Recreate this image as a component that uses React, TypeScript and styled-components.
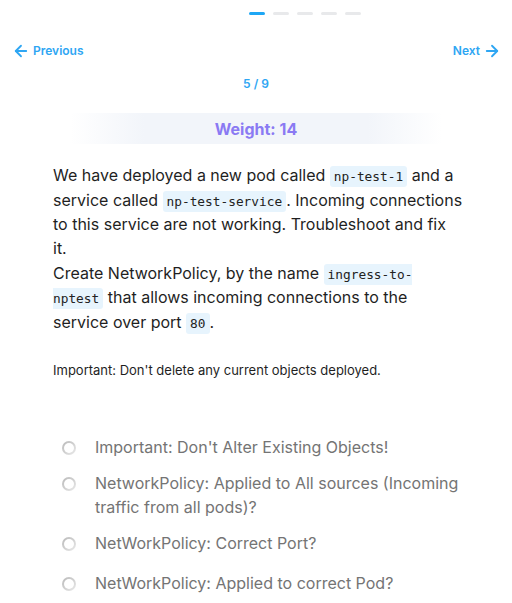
import React from "react";
import styled, { createGlobalStyle } from "styled-components";
import { ArrowLeft, ArrowRight } from "lucide-react";

const Global = createGlobalStyle`
  html, body { margin: 0; padding: 0; background: #ffffff; }
  body { font-family: Inter, "Noto Sans", "Liberation Sans", sans-serif; color: #1f1f1f; }
  * { box-sizing: border-box; }
`;

const Page = styled.div`
  width: 512px;
  height: 603px;
  overflow: hidden;
  display: flex;
  flex-direction: column;
`;

const Dots = styled.div`
  display: flex;
  gap: 8px;
  padding-left: 249px;
  margin-top: 12px;
`;

const Dot = styled.span<{ $active?: boolean }>`
  width: 16px;
  height: 3px;
  border-radius: 2px;
  background: ${(p) => (p.$active ? "#1ea7f5" : "#e8e9eb")};
`;

const Nav = styled.div`
  display: flex;
  justify-content: space-between;
  align-items: center;
  padding: 0 11px 0 12px;
  margin-top: 26px;
  height: 20px;
`;

const NavLink = styled.a`
  display: flex;
  align-items: center;
  gap: 3px;
  color: #2ea6f3;
  font-size: 12px;
  font-weight: 600;
  cursor: pointer;
  text-decoration: none;
`;

const Counter = styled.div`
  text-align: center;
  color: #2ea6f3;
  font-size: 12px;
  font-weight: 600;
  margin-top: 16px;
  line-height: 16px;
`;

const WeightBand = styled.div`
  margin: 21px 70px 0;
  height: 32px;
  display: flex;
  align-items: center;
  justify-content: center;
  background: linear-gradient(90deg, rgba(240, 244, 250, 0) 0%, #f2f5fa 20%, #f2f5fa 80%, rgba(240, 244, 250, 0) 100%);
  color: #8a7af3;
  font-size: 16px;
  font-weight: 700;
`;

const Question = styled.div`
  padding: 0 0 0 53px;
  width: 480px;
  margin-top: 19px;
  font-size: 16px;
  line-height: 24.4px;
  color: #1f1f1f;
`;

const Code = styled.code`
  font-family: "DejaVu Sans Mono", "Liberation Mono", monospace;
  font-size: 12.8px;
  line-height: 16px;
  background: #e7f4fd;
  color: #222;
  padding: 3px 4px;
  border-radius: 3px;
`;

const Note = styled.p`
  margin: 26px 0 0 53px;
  font-size: 13px;
  line-height: 20px;
  color: #1f1f1f;
`;

const Options = styled.ul`
  list-style: none;
  margin: 47px 0 0;
  padding: 0;
`;

const Option = styled.li`
  display: flex;
  align-items: center;
  min-height: 40px;
  padding: 4px 30px 4px 62px;
`;

const OptionRow = styled.label`
  display: flex;
  align-items: flex-start;
  gap: 19px;
  font-size: 16px;
  line-height: 24px;
  color: #747474;
`;

const Radio = styled.span`
  flex: none;
  width: 14px;
  height: 14px;
  margin-top: 6px;
  border-radius: 50%;
  background: linear-gradient(135deg, #b9b9b9 0%, #d0d0d0 50%, #ececec 100%);
  display: flex;
  align-items: center;
  justify-content: center;
  &::after {
    content: "";
    width: 10px;
    height: 10px;
    border-radius: 50%;
    background: #fff;
  }
`;

const options = [
  "Important: Don't Alter Existing Objects!",
  "NetworkPolicy: Applied to All sources (Incoming traffic from all pods)?",
  "NetWorkPolicy: Correct Port?",
  "NetWorkPolicy: Applied to correct Pod?",
];

export default function App() {
  return (
    <Page>
      <Global />
      <Dots>
        <Dot $active />
        <Dot />
        <Dot />
        <Dot />
        <Dot />
      </Dots>
      <Nav>
        <NavLink>
          <ArrowLeft size={18} strokeWidth={2.4} />
          Previous
        </NavLink>
        <NavLink>
          Next
          <ArrowRight size={18} strokeWidth={2.4} />
        </NavLink>
      </Nav>
      <Counter>5 / 9</Counter>
      <WeightBand>Weight: 14</WeightBand>
      <Question>
        We have deployed a new pod called <Code>np-test-1</Code> and a<br />
        service called <Code>np-test-service</Code>. Incoming connections<br />
        to this service are not working. Troubleshoot and fix<br />
        it.
        <br />
        Create NetworkPolicy, by the name <Code>ingress-to-<br />nptest</Code> that allows
        incoming connections to the<br />
        service over port <Code>80</Code>.
      </Question>
      <Note>Important: Don't delete any current objects deployed.</Note>
      <Options>
        {options.map((o) => (
          <Option key={o}>
            <OptionRow>
              <Radio />
              <span>{o}</span>
            </OptionRow>
          </Option>
        ))}
      </Options>
    </Page>
  );
}
